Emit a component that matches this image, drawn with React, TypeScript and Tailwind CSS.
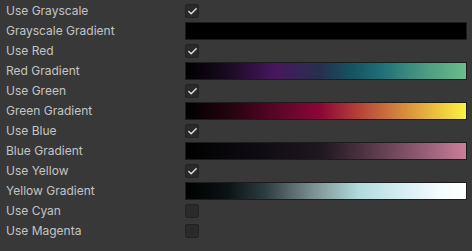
import { Check } from "lucide-react";

type Row =
  | { label: string; kind: "toggle"; checked: boolean }
  | { label: string; kind: "gradient"; bg: string };

const rows: Row[] = [
  { label: "Use Grayscale", kind: "toggle", checked: true },
  { label: "Grayscale Gradient", kind: "gradient", bg: "bg-black" },
  { label: "Use Red", kind: "toggle", checked: true },
  {
    label: "Red Gradient",
    kind: "gradient",
    bg: "bg-[linear-gradient(to_right,#000000_0%,#1a0a22_15%,#47175e_32%,#27304e_48%,#15505e_58%,#1f6f78_70%,#4a9a82_85%,#6bbd8b_100%)]",
  },
  { label: "Use Green", kind: "toggle", checked: true },
  {
    label: "Green Gradient",
    kind: "gradient",
    bg: "bg-[linear-gradient(to_right,#000000_0%,#2a0412_18%,#5c0628_33%,#8d0636_48%,#b03a3a_60%,#d07a3c_74%,#e9bb3e_88%,#fbf240_100%)]",
  },
  { label: "Use Blue", kind: "toggle", checked: true },
  {
    label: "Blue Gradient",
    kind: "gradient",
    bg: "bg-[linear-gradient(to_right,#000000_0%,#0e0b12_25%,#1f1622_48%,#4a3040_62%,#8a5870_82%,#c97f98_100%)]",
  },
  { label: "Use Yellow", kind: "toggle", checked: true },
  {
    label: "Yellow Gradient",
    kind: "gradient",
    bg: "bg-[linear-gradient(to_right,#000000_0%,#0c1214_15%,#2c3c3e_28%,#7a8e8e_45%,#b2dcdc_62%,#d6eef2_78%,#f4fbfc_90%,#ffffff_100%)]",
  },
  { label: "Use Cyan", kind: "toggle", checked: false },
  { label: "Use Magenta", kind: "toggle", checked: false },
];

export default function App() {
  return (
    <div className="w-[472px] h-[251px] bg-[#383838] pt-[2px] flex flex-col gap-[2px] font-['Inter','Liberation_Sans',sans-serif] text-[12px] text-[#c4c4c4]">
      {rows.map((row) => (
        <div key={row.label} className="h-[18px] flex items-center pl-[6px] pr-[5px]">
          <div className="w-[179px] shrink-0 leading-[18px]">{row.label}</div>
          {row.kind === "toggle" ? (
            <div className="w-[14px] h-[14px] rounded-[2px] bg-[#2a2a2a] border border-[#222222] flex items-center justify-center">
              {row.checked && <Check size={11} strokeWidth={3} className="text-[#e0e0e0]" />}
            </div>
          ) : (
            <div className={`flex-1 h-[18px] border border-[#1c1c1c] ${row.bg}`} />
          )}
        </div>
      ))}
    </div>
  );
}
